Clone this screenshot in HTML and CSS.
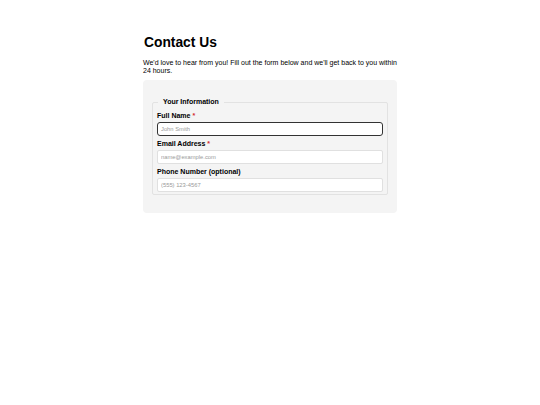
FILE: index.html
```html
<!DOCTYPE html>
<html lang="en">
<head>
<meta charset="utf-8">
<title>Contact Us</title>
<link rel="stylesheet" href="styles.css">
</head>
<body>
<main class="page">
  <h1 class="title">Contact Us</h1>
  <p class="intro">We'd love to hear from you! Fill out the form below and we'll get back to you within 24 hours.</p>
  <form class="card">
    <fieldset class="group">
      <legend class="legend">Your Information</legend>
      <div class="field">
        <label class="label" for="name">Full Name <span class="req">*</span></label>
        <input class="input input-focus" id="name" type="text" placeholder="John Smith">
      </div>
      <div class="field">
        <label class="label" for="email">Email Address <span class="req">*</span></label>
        <input class="input" id="email" type="email" placeholder="name@example.com">
      </div>
      <div class="field">
        <label class="label" for="phone">Phone Number (optional)</label>
        <input class="input" id="phone" type="tel" placeholder="(555) 123-4567">
      </div>
    </fieldset>
  </form>
</main>
</body>
</html>
```
FILE: styles.css
```css
* { box-sizing: border-box; }
html, body { margin: 0; padding: 0; background: #ffffff; }
body {
  font-family: "Liberation Sans", Arial, sans-serif;
  color: #000;
}
.page {
  width: 254px;
  margin: 0 auto;
  padding-top: 34px;
}
.title {
  margin: 0 0 0 1px;
  font-size: 13.8px;
  line-height: 18px;
  font-weight: bold;
}
.intro {
  margin: 7px 0 0;
  font-size: 7px;
  line-height: 8px;
}
.card {
  margin-top: 5px;
  background: #f4f4f4;
  border-radius: 4px;
  padding: 18px 9px 18px;
}
.group {
  margin: 0;
  border: 1px solid #e2e2e2;
  border-radius: 2px;
  padding: 6px 4px 2px;
  display: flex;
  flex-direction: column;
  gap: 4px;
}
.legend {
  padding: 0 5px;
  margin-left: 1px;
  font-size: 7px;
  line-height: 8px;
  font-weight: bold;
}
.field {
  display: flex;
  flex-direction: column;
  gap: 2px;
}
.label {
  font-size: 7px;
  line-height: 8px;
  font-weight: bold;
}
.req { color: #d32f2f; }
.input {
  height: 14px;
  width: 100%;
  border: 1px solid #e0e0e0;
  border-radius: 2px;
  background: #fff;
  padding: 0 3px;
  font-family: "Liberation Sans", Arial, sans-serif;
  font-size: 5.8px;
  color: #333;
  outline: none;
}
.input::placeholder { color: #9a9a9a; }
.input-focus {
  border: 1.5px solid #333;
  border-radius: 3px;
}
```
